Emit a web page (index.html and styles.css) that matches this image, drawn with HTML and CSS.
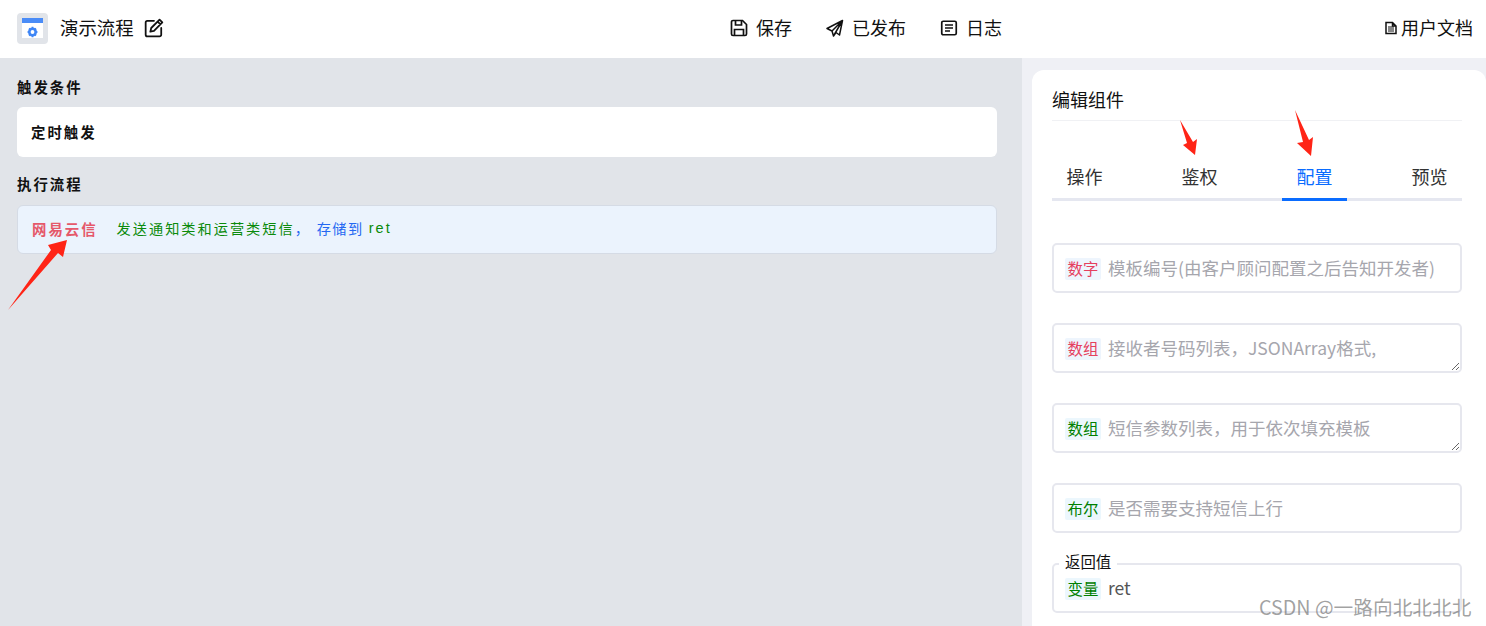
FILE: index.html
```html
<!DOCTYPE html>
<html lang="zh-CN">
<head>
<meta charset="utf-8">
<title>演示流程</title>
<link rel="stylesheet" href="styles.css">
</head>
<body>
<div class="app">
  <header class="topbar">
    <div class="top-left">
      <span class="logo">
        <svg viewBox="0 0 31 31" width="31" height="31">
          <rect x="5" y="5" width="21" height="20" fill="#fff"/>
          <rect x="5" y="5" width="21" height="5" fill="#4a8cf7"/>
          <circle cx="15.5" cy="19" r="3.2" fill="none" stroke="#3f86f6" stroke-width="2.6"/>
          <path d="M15.5 13.8v2M15.5 22.2v2M10.6 19h2M18.4 19h2M12 15.5l1.4 1.4M17.6 21.1l1.4 1.4M12 22.5l1.4-1.4M17.6 16.900l1.400-1.400" stroke="#3f86f6" stroke-width="1.800"/>
        </svg>
      </span>
      <span class="flow-name">演示流程</span>
      <svg class="ico edit" viewBox="0 0 18 18" width="20" height="20">
        <path d="M9 2.500H3A1.500 1.500 0 0 0 1.500 4v11A1.500 1.500 0 0 0 3 16.500h11a1.500 1.500 0 0 0 1.500-1.500V9" fill="none" stroke="#111" stroke-width="1.600" stroke-linecap="round"/>
        <path d="M14 1.500l2.500 2.500-7.500 7.500-3.300.800.800-3.300zM12.300 3.200l2.500 2.500" fill="none" stroke="#111" stroke-width="1.600" stroke-linejoin="round"/>
      </svg>
    </div>
    <nav class="top-mid">
      <a class="act">
        <svg class="ico" viewBox="0 0 18 18" width="18" height="18">
          <path d="M1.500 3A1.500 1.500 0 0 1 3 1.500h9.500l4 4V15a1.500 1.500 0 0 1-1.500 1.500H3A1.500 1.500 0 0 1 1.500 15z" fill="none" stroke="#111" stroke-width="1.700"/>
          <path d="M5.500 2v4h6V2M4.500 16v-5.500h9V16" fill="none" stroke="#111" stroke-width="1.700"/>
        </svg>
        <span class="lbl">保存</span>
      </a>
      <a class="act">
        <svg class="ico" viewBox="0 0 18 18" width="18" height="18">
          <path d="M16.500 1.500L1 9.500l5 2.500 1.500 5 2.500-3.500 3.500 2.500zM16.500 1.500L6 12M16.500 1.500L7.500 17" fill="none" stroke="#111" stroke-width="1.500" stroke-linejoin="round"/>
        </svg>
        <span class="lbl">已发布</span>
      </a>
      <a class="act">
        <svg class="ico" viewBox="0 0 18 18" width="18" height="18">
          <rect x="1.750" y="2.250" width="14.500" height="13.500" rx="1.500" fill="none" stroke="#111" stroke-width="1.700"/>
          <path d="M5 6h8M5 9h8M5 12h5" stroke="#111" stroke-width="1.500"/>
        </svg>
        <span class="lbl">日志</span>
      </a>
    </nav>
    <a class="docs">
      <svg class="ico" viewBox="0 0 14 14" width="14" height="14">
        <path d="M2 1.500h6.500L12 5v7.500H2zM8.500 1.500V5H12" fill="none" stroke="#111" stroke-width="1.500"/>
        <path d="M4 6h6M4 8h6M4 10h6" stroke="#111" stroke-width="1.200"/>
      </svg>
      <span class="lbl">用户文档</span>
    </a>
  </header>

  <div class="main">
    <section class="canvas">
      <h2 class="sec-title">触发条件</h2>
      <div class="trigger">定时触发</div>
      <h2 class="sec-title flow-title">执行流程</h2>
      <div class="step">
        <b class="step-name">网易云信</b>
        <span class="step-desc">发送通知类和运营类短信</span>
        <span class="step-sep">，</span>
        <span class="step-save">存储到</span>
        <span class="step-var">ret</span>
      </div>
    </section>

    <aside class="side">
      <div class="card">
        <h3 class="card-title">编辑组件</h3>
        <div class="tabs">
          <span class="tab">操作</span>
          <span class="tab">鉴权</span>
          <span class="tab active">配置</span>
          <span class="tab">预览</span>
        </div>
        <div class="fields">
          <div class="field">
            <span class="tag red">数字</span>
            <input class="inp" placeholder="模板编号(由客户顾问配置之后告知开发者)">
          </div>
          <div class="field">
            <span class="tag red">数组</span>
            <textarea class="inp area" placeholder="接收者号码列表，JSONArray格式,"></textarea>
          </div>
          <div class="field">
            <span class="tag green">数组</span>
            <textarea class="inp area" placeholder="短信参数列表，用于依次填充模板"></textarea>
          </div>
          <div class="field">
            <span class="tag green">布尔</span>
            <input class="inp" placeholder="是否需要支持短信上行">
          </div>
          <div class="field">
            <span class="legend">返回值</span>
            <span class="tag green">变量</span>
            <input class="inp" value="ret">
          </div>
        </div>
      </div>
    </aside>
  </div>

  <svg class="arrows" viewBox="0 0 1486 626" width="1486" height="626">
    <polygon points="8,310 51,250 48,245 67,240 63,257 58,253" fill="#ff2416"/>
    <polygon points="1180,120 1193,142 1197,139 1195,155 1183,145 1187,143" fill="#ff2416"/>
    <polygon points="1295,110 1309,140 1313,137 1311,156 1297,143 1303,142" fill="#ff2416"/>
  </svg>
  <div class="watermark">CSDN @一路向北北北北</div>
</div>
</body>
</html>
```
FILE: styles.css
```css
* { box-sizing: border-box; }
html, body { margin: 0; padding: 0; height: 100%; overflow: hidden; }
body {
  font-family: "Noto Sans CJK SC", "Liberation Sans", sans-serif;
  color: #111;
  background: #e1e4e9;
}
.app { position: relative; width: 1486px; height: 626px; overflow: hidden; display: flex; flex-direction: column; }

.topbar {
  height: 58px;
  flex: none;
  background: #fff;
  display: grid;
  grid-template-columns: 713px auto 1fr;
  align-items: center;
  padding: 0 13px 2px 17px;
  font-size: 18px;
  line-height: 26px;
}
.top-left { display: flex; align-items: center; }
.logo { width: 31px; height: 31px; background: #e1e4e9; border-radius: 4px; display: block; }
.logo svg { display: block; }
.flow-name { margin-left: 12px; margin-top: -2px; font-size: 18.400px; }
.lbl { margin-top: -2px; }
.ico { display: block; flex: none; }
.edit { margin-left: 10px; }
.top-mid { display: flex; gap: 34px; }
.act { display: flex; align-items: center; gap: 8px; }
.docs { justify-self: end; display: flex; align-items: center; gap: 3px; }

.main { flex: 1; display: flex; min-height: 0; }
.canvas { width: 1022px; flex: none; background: #e1e4e9; padding: 18px 25px 0 17px; }
.sec-title { margin: 0; font-size: 14.400px; line-height: 21px; font-weight: 700; letter-spacing: 2px; height: 21px; }
.flow-title { margin-top: 16px; }
.trigger {
  margin-top: 10px;
  height: 50px;
  background: #fff;
  border-radius: 6px;
  padding: 0 14px 2px;
  display: flex;
  align-items: center;
  font-size: 14.400px;
  font-weight: 700;
  letter-spacing: 2px;
}
.step {
  margin-top: 11px;
  height: 49px;
  background: #ebf3fd;
  border: 1px solid #d5dbe5;
  border-radius: 6px;
  padding: 0 14px 3px;
  display: flex;
  align-items: center;
  font-size: 14.200px;
  letter-spacing: 2px;
  white-space: pre;
}
.step-name { color: #e5586a; font-weight: 700; margin-right: 19px; font-size: 14.400px; }
.step-desc { color: #0a8a0a; }
.step-sep { color: #2468f2; width: 22px; }
.step-save { color: #2468f2; letter-spacing: 1.500px; }
.step-var { color: #0a8a0a; margin-left: 5px; font-family: "Liberation Sans", sans-serif; font-size: 14.500px; }

.side { flex: 1; background: #eff0f5; padding: 12px 0 0 10px; }
.card { background: #fff; border-radius: 12px 12px 0 0; height: 100%; padding: 16px 24px 0 20px; }
.card-title {
  margin: 0;
  height: 35px;
  font-size: 18px;
  line-height: 26px;
  font-weight: 400;
  border-bottom: 1px solid #f0f1f4;
}
.tabs {
  margin-top: 27px;
  display: flex;
  justify-content: space-between;
  border-bottom: 3px solid #e5e7f0;
  height: 53px;
}
.tab {
  width: 65px;
  height: 53px;
  padding-top: 15px;
  text-align: center;
  font-size: 18px;
  line-height: 26px;
  color: #333;
  border-bottom: 3px solid transparent;
}
.tab.active { color: #0a6cff; border-bottom-color: #0a6cff; }
.fields { margin-top: 42px; display: flex; flex-direction: column; gap: 30px; }
.field {
  position: relative;
  height: 50px;
  border: 2px solid #e6e7ee;
  border-radius: 5px;
  padding-left: 11px;
  display: flex;
  align-items: center;
  background: #fff;
}
.tag {
  flex: none;
  width: 36px;
  height: 22px;
  margin-top: 2px;
  border-radius: 2px;
  font-size: 15.400px;
  line-height: 21px;
  text-align: center;
  white-space: nowrap;
}
.tag.red { color: #e5405e; background: #eef5fd; }
.tag.green { color: #008000; background: #ecf7fd; }
.inp {
  flex: 1;
  min-width: 0;
  margin-left: 7px;
  border: 0;
  outline: 0;
  padding: 0;
  background: transparent;
  font-family: inherit;
  font-size: 17.500px;
  color: #555;
  height: 26px;
  line-height: 26px;
}
.inp::placeholder { color: #a6a6ad; opacity: 1; }
.area {
  align-self: flex-start;
  height: 46px;
  padding-top: 10px;
  resize: vertical;
}
.legend {
  position: absolute;
  left: 5px;
  top: -14px;
  background: #fff;
  padding: 0 6px;
  font-size: 15.400px;
  line-height: 20px;
  height: 16px;
}

.arrows { position: absolute; left: 0; top: 0; pointer-events: none; }
.watermark {
  position: absolute;
  left: 1259px;
  top: 594px;
  font-size: 19.700px;
  line-height: 26px;
  color: rgba(100, 100, 100, 0.6);
  white-space: nowrap;
}
```
